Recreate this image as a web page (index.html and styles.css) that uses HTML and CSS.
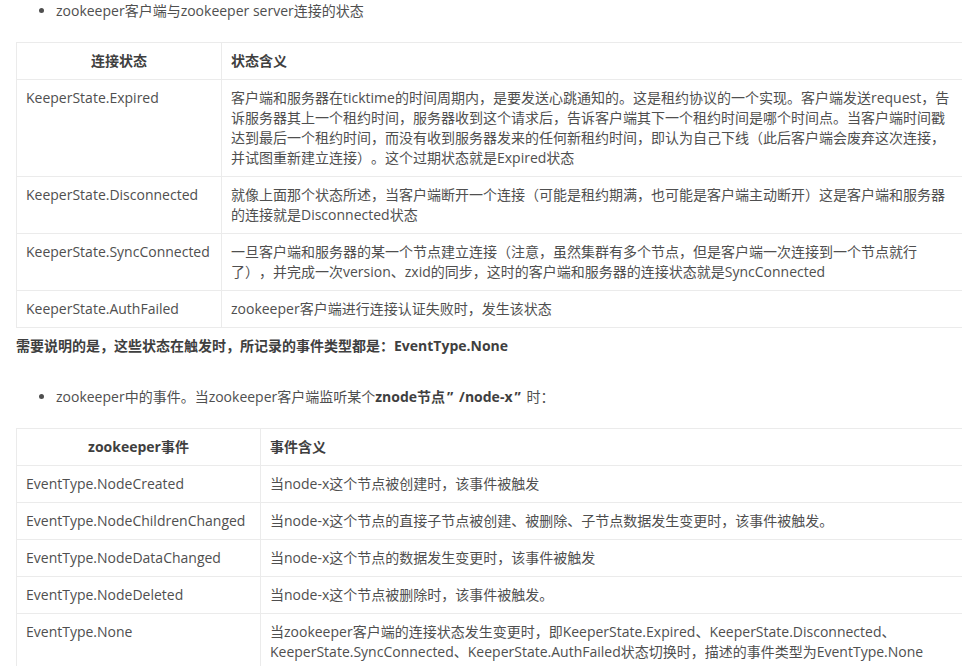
FILE: index.html
```html
<!DOCTYPE html>
<html lang="zh-CN">
<head>
<meta charset="utf-8">
<title>zookeeper</title>
<link rel="stylesheet" href="styles.css">
</head>
<body>
<div class="article">
  <ul class="list first">
    <li>zookeeper客户端与zookeeper server连接的状态</li>
  </ul>
  <table class="tbl tbl-state">
    <thead>
      <tr><th class="c1">连接状态</th><th class="c2">状态含义</th></tr>
    </thead>
    <tbody>
      <tr><td>KeeperState.Expired</td><td>客户端和服务器在ticktime的时间周期内，是要发送心跳通知的。这是租约协议的一个实现。客户端发送request，告诉服务器其上一个租约时间，服务器收到这个请求后，告诉客户端其下一个租约时间是哪个时间点。当客户端时间戳达到最后一个租约时间，而没有收到服务器发来的任何新租约时间，即认为自己下线（此后客户端会废弃这次连接，并试图重新建立连接）。这个过期状态就是Expired状态</td></tr>
      <tr><td>KeeperState.Disconnected</td><td>就像上面那个状态所述，当客户端断开一个连接（可能是租约期满，也可能是客户端主动断开）这是客户端和服务器的连接就是Disconnected状态</td></tr>
      <tr><td>KeeperState.SyncConnected</td><td>一旦客户端和服务器的某一个节点建立连接（注意，虽然集群有多个节点，但是客户端一次连接到一个节点就行了），并完成一次version、zxid的同步，这时的客户端和服务器的连接状态就是SyncConnected</td></tr>
      <tr><td>KeeperState.AuthFailed</td><td>zookeeper客户端进行连接认证失败时，发生该状态</td></tr>
    </tbody>
  </table>
  <p class="note"><strong>需要说明的是，这些状态在触发时，所记录的事件类型都是：EventType.None</strong></p>
  <ul class="list second">
    <li>zookeeper中的事件。当zookeeper客户端监听某个<strong>znode节点<span class="fwq">”</span>/node-x<span class="fwq">”</span></strong>时：</li>
  </ul>
  <table class="tbl tbl-event">
    <thead>
      <tr><th class="c1">zookeeper事件</th><th class="c2">事件含义</th></tr>
    </thead>
    <tbody>
      <tr><td>EventType.NodeCreated</td><td>当node-x这个节点被创建时，该事件被触发</td></tr>
      <tr><td>EventType.NodeChildrenChanged</td><td>当node-x这个节点的直接子节点被创建、被删除、子节点数据发生变更时，该事件被触发。</td></tr>
      <tr><td>EventType.NodeDataChanged</td><td>当node-x这个节点的数据发生变更时，该事件被触发</td></tr>
      <tr><td>EventType.NodeDeleted</td><td>当node-x这个节点被删除时，该事件被触发。</td></tr>
      <tr><td>EventType.None</td><td>当zookeeper客户端的连接状态发生变更时，即KeeperState.Expired、KeeperState.Disconnected、KeeperState.SyncConnected、KeeperState.AuthFailed状态切换时，描述的事件类型为EventType.None</td></tr>
    </tbody>
  </table>
</div>
</body>
</html>
```
FILE: styles.css
```css
html, body {
  margin: 0;
  padding: 0;
  background: #fff;
  overflow: hidden;
}
body {
  font-family: "Open Sans", "Noto Sans CJK SC", sans-serif;
  font-size: 14px;
  line-height: 20px;
  color: #4f4f4f;
  text-spacing-trim: space-all;
}
.article {
  padding: 1px 0 0 16px;
  width: 1000px;
}
.list {
  margin: 0;
  padding-left: 40px;
}
.list li {
  line-height: 20px;
}
.list strong {
  color: #3f3f3f;
  font-weight: 700;
}
.fwq {
  display: inline-block;
  width: 14px;
  padding-left: 2px;
  box-sizing: border-box;
  text-align: left;
}
.tbl {
  border-collapse: collapse;
  width: 948px;
  table-layout: fixed;
  margin-top: 21px;
}
.tbl th, .tbl td {
  border: 1px solid #ebebeb;
  padding: 8px 9px;
  vertical-align: top;
  text-align: left;
  line-height: 20px;
}
.tbl th {
  font-weight: 700;
  color: #3f3f3f;
}
.tbl th.c1 {
  text-align: center;
}
.tbl-state th.c1 { width: 186px; }
.tbl-event th.c1 { width: 225px; }
.note {
  margin: 8px 0 0 0;
  color: #3f3f3f;
}
.list.second {
  margin-top: 31px;
}
```
